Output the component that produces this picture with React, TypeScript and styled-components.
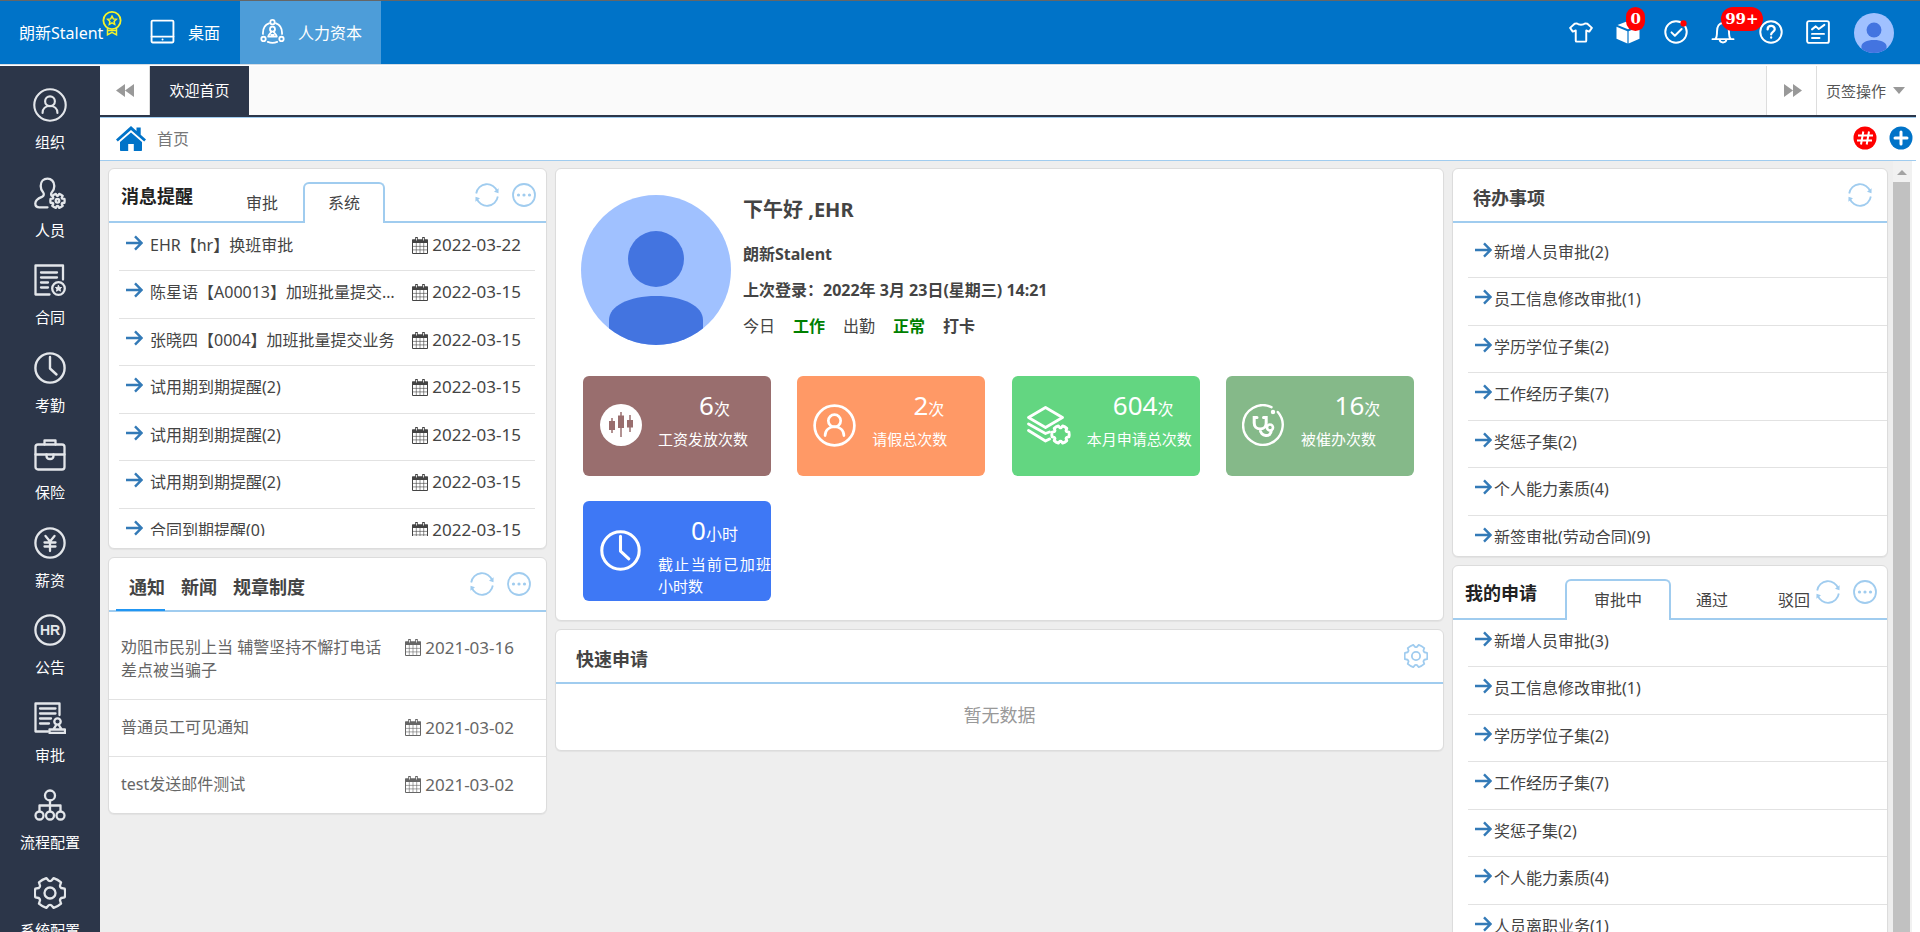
import React from "react";
import styled, { createGlobalStyle, css } from "styled-components";

const BLUE = "#0073c8";
const NAVY = "#2c3649";
const SKY = "#a0ccef";

const GlobalStyle = createGlobalStyle`
  * { box-sizing: border-box; }
  body {
    margin: 0;
    color: #444;
    background: #fff;
    font: 16px/24px "Noto Sans", "Noto Sans CJK SC", sans-serif;
  }
  button {
    margin: 0;
    padding: 0;
    border: 0;
    background: none;
    color: inherit;
    font: inherit;
    cursor: pointer;
  }
  a { color: inherit; text-decoration: none; }
  ul { list-style: none; margin: 0; padding: 0; }
  h1, h2, h3, p { margin: 0; }
  svg { display: block; flex: none; }
`;

/* ---------- icons ---------- */

type IconProps = { size?: number; w?: number; children?: React.ReactNode };

const Line = ({ size = 32, w = 2.3, children }: IconProps) => (
  <svg width={size} height={size} viewBox="0 0 32 32" fill="none" stroke="currentColor" strokeWidth={w} strokeLinecap="round" strokeLinejoin="round" aria-hidden="true">
    {children}
  </svg>
);

function gear(cx: number, cy: number, outer: number, inner: number, teeth: number) {
  const step = 360 / teeth;
  const at = (deg: number, r: number) => {
    const a = (deg * Math.PI) / 180;
    return `${(cx + r * Math.cos(a)).toFixed(2)} ${(cy + r * Math.sin(a)).toFixed(2)}`;
  };
  let d = `M${at(-step * 0.27, outer)}`;
  for (let k = 0; k < teeth; k++) {
    const c = k * step;
    d += `Q${at(c, outer * 1.02)} ${at(c + step * 0.27, outer)}`;
    d += `L${at(c + step * 0.4, inner)}Q${at(c + step * 0.5, inner * 0.95)} ${at(c + step * 0.6, inner)}`;
    d += `L${at(c + step * 0.73, outer)}`;
  }
  return d + "Z";
}

const OrgIcon = ({ size = 34, w = 2 }: IconProps) => (
  <Line size={size} w={w}>
    <circle cx="16" cy="16" r="14.8" />
    <circle cx="16" cy="12.5" r="4.6" />
    <path d="M9 23.5c0-4 3-6.6 7-6.6s7 2.6 7 6.6" />
  </Line>
);
const StaffIcon = () => (
  <Line>
    <path d="M17.5 18.5c-1-1.500-.2-2.600.6-3.600 1.300-1.600 2.200-3.300 2.200-6 0-4.400-3-7.200-6.800-7.200S6.700 4.500 6.700 8.900c0 2.700.9 4.400 2.200 6 1.500 2 1.200 4-1 5C4.500 21.300 1.300 23.500 1.300 26.500c0 2.500 1.700 3.800 4.200 3.800h8" />
    <path d={gear(23.5, 23.8, 7.2, 5.2, 6)} />
    <circle cx="23.5" cy="23.8" r="1.8" />
  </Line>
);
const ContractIcon = () => (
  <Line>
    <path d="M15.500 30.500H1.500v-29h27.500v14M7 8.500h16M7 13.500h16M7 18.500h7M7 23.500h7" />
    <circle cx="24.500" cy="24.500" r="6.300" />
    <path d="m24.500 21.500 1 2h2.100l-1.600 1.500.5 2.200-2-1.100-2 1.100.5-2.200-1.600-1.500h2.100Z" fill="currentColor" strokeWidth="1" />
  </Line>
);
const ClockIcon = ({ size = 32 }: IconProps) => (
  <Line size={size} w={2.400}>
    <circle cx="16" cy="16" r="14.600" />
    <path d="M16 5v11.500l6.500 6" />
  </Line>
);
const CaseIcon = () => (
  <Line>
    <rect x="1.500" y="5.500" width="29" height="25" rx="2.500" />
    <path d="M10.500 5.500v-4h11v4M1.500 15.500h11M19.500 15.500h11" />
    <path d="M12.500 15.500h7v1.500c0 4-7 4-7 0Z" />
  </Line>
);
const YuanIcon = () => (
  <Line>
    <circle cx="16" cy="16" r="14.600" />
    <path d="m11.500 9 4.500 5.500L20.500 9M16 14.500V24M10.500 15.500h11M10.500 19.500h11" />
  </Line>
);
const HrIcon = () => (
  <Line>
    <circle cx="16" cy="16" r="14.600" />
    <text x="16" y="20.800" textAnchor="middle" fontFamily="Liberation Sans, sans-serif" fontWeight="700" fontSize="14" fill="currentColor" stroke="none">HR</text>
  </Line>
);
const ApproveIcon = () => (
  <Line>
    <path d="M14 29.500H1.500v-28h24V13M6 6.500h15.500M6 11.500h15.500M6 16.500h11M6 21.500h9" />
    <circle cx="23.500" cy="19.500" r="3.200" />
    <path d="M22 22.800c0 2-2.500 3.200-2.500 4.700h8c0-1.500-2.500-2.700-2.500-4.700M15.500 27.500h15.500v3.500H15.500Z" />
  </Line>
);
const FlowIcon = () => (
  <Line>
    <circle cx="16" cy="6.500" r="5" />
    <path d="M16 11.500v10.500M5.500 22v-5.500h21V22" />
    <circle cx="5.500" cy="26.500" r="4" />
    <circle cx="16" cy="26.500" r="4" />
    <circle cx="26.500" cy="26.500" r="4" />
  </Line>
);
const GearIcon = ({ size = 32, w = 2.300 }: IconProps) => (
  <Line size={size} w={w}>
    <path d={gear(16, 16, 15.300, 12.300, 6)} />
    <circle cx="16" cy="16" r="5.500" />
  </Line>
);

const MedalIcon = () => (
  <svg width="20" height="25" viewBox="0 0 20 25" fill="none" stroke="#f3f32b" strokeWidth="1.800" aria-hidden="true">
    <circle cx="10" cy="9.500" r="8.600" />
    <path d="m10 5.200 1.300 2.700 3 .4-2.200 2.100.6 3-2.700-1.500-2.700 1.500.6-3-2.200-2.100 3-.4Z" strokeWidth="1.500" />
    <path d="M5.500 17v6.800l4.500-2.500 4.500 2.500V17M5.500 19.500h9" strokeWidth="1.500" />
  </svg>
);
const TabletIcon = () => (
  <Line size={25} w={2.400}>
    <rect x="2" y="2" width="28" height="28" rx="1.500" />
    <path d="M2 22.500h28M16 26.300h.1" />
  </Line>
);
const CapitalIcon = () => (
  <Line size={25} w={2.300}>
    <circle cx="16" cy="4" r="2.800" />
    <circle cx="4.500" cy="25.500" r="2.800" />
    <circle cx="27.500" cy="25.500" r="2.800" />
    <path d="M11.500 5.500C6 7.500 3.500 12 3.800 19M20.500 5.500c5.500 2 8 6.500 7.700 13.500M10 29.300c4 1.600 8 1.600 12 0" />
    <circle cx="16" cy="13" r="3.200" />
    <path d="M14.500 16c0 2-3.500 3-4 6.500h11c-.5-3.500-4-4.500-4-6.500M14.500 20.500h3" />
  </Line>
);
const ShirtIcon = () => (
  <Line size={24} w={2.600}>
    <path d="M10.500 4.500c2.500 2.500 8.500 2.500 11 0l3 .5 6 5.500-3.500 5-4-1.500V27.500c0 .8-.5 1.300-1.300 1.300H10.300c-.8 0-1.300-.5-1.300-1.300V14l-4 1.500-3.500-5 6-5.500Z" />
  </Line>
);
const BoxIcon = () => (
  <svg width="24" height="24" viewBox="0 0 24 24" fill="currentColor" aria-hidden="true">
    <path d="M12 1 22.500 5 12 9.300 1.500 5ZM.5 6.800l10.900 4.400v12.300L.5 18.800ZM23.500 6.800l-10.900 4.400v12.300l10.900-4.700Z" />
  </svg>
);
const CheckIcon = () => (
  <Line size={24} w={2.600}>
    <circle cx="16" cy="16" r="14.300" />
    <path d="m10 16.500 4.500 4.500 9-9" />
    <circle cx="26" cy="4.500" r="4.200" fill="#f00" stroke="none" />
  </Line>
);
const BellIcon = () => (
  <Line size={24} w={2.600}>
    <path d="M2 25.500h28M6 25c1.800-2 2-4 2-9.500 0-7 3-11.500 8-11.500s8 4.500 8 11.500c0 5.500.2 7.500 2 9.500M11.500 26.500c1 4.500 8 4.500 9 0" />
  </Line>
);
const HelpIcon = () => (
  <Line size={24} w={2.600}>
    <circle cx="16" cy="16" r="14.300" />
    <path d="M11.500 12.500c0-6 9.500-6 9.500-.3 0 3.500-4.800 3.600-4.800 7M16.200 23.300v.2" strokeWidth="3" />
  </Line>
);
const ReportIcon = () => (
  <Line size={24} w={2.600}>
    <rect x="1.500" y="1.500" width="29" height="29" rx="2.500" />
    <path d="m8 12.500 5-4 4 3.500 7.500-5.500M8 18.500h16M8 24h10" />
  </Line>
);
const RefreshIcon = () => (
  <svg width="24" height="24" viewBox="0 0 24 24" fill="none" stroke="currentColor" strokeWidth="1.800" aria-hidden="true">
    <path d="M1.200 10.500A10.900 10.900 0 0 1 22.300 8.600M22.800 13.500A10.900 10.900 0 0 1 1.700 15.400" />
    <path d="M19 8.700 23.600 5.300l-.1 5ZM5 15.300.4 18.700l.1-5Z" fill="currentColor" stroke="none" />
  </svg>
);
const MoreIcon = () => (
  <svg width="24" height="24" viewBox="0 0 24 24" fill="currentColor" aria-hidden="true">
    <circle cx="12" cy="12" r="11" fill="none" stroke="currentColor" strokeWidth="1.800" />
    <circle cx="6.500" cy="12" r="1.600" />
    <circle cx="12" cy="12" r="1.600" />
    <circle cx="17.500" cy="12" r="1.600" />
  </svg>
);
const ArrowIcon = () => (
  <svg width="17" height="20" viewBox="0 0 17 20" fill="none" stroke="#337ab7" strokeWidth="2.400" aria-hidden="true">
    <path d="M0 10h15.500M9 3.300 15.500 10 9 16.700" />
  </svg>
);
const CalendarIcon = () => (
  <svg width="16" height="17" viewBox="0 0 16 17" fill="none" stroke="currentColor" aria-hidden="true">
    <path d="M.5 3h15v13.500H.5Z" />
    <path d="M0 2.500h16v3.500H0Z" fill="currentColor" stroke="none" />
    <path d="M4.500.5v3.500M11.500.5v3.500" strokeWidth="2.600" strokeLinecap="round" />
    <path d="M4.500 1v2.500M11.500 1v2.500" stroke="#fff" strokeWidth=".8" />
    <path d="M4.300 6v10M8 6v10M11.700 6v10M1 9.400h14M1 12.900h14" strokeWidth=".6" />
  </svg>
);
const HomeIcon = () => (
  <svg width="30" height="26" viewBox="0 0 30 26" fill={BLUE} aria-hidden="true">
    <path d="M15 6.500 26 16v8.200c0 .5-.3.800-.8.800h-7.400v-7h-5.600v7H4.800c-.5 0-.8-.3-.8-.8V16Z" />
    <path d="M15 0 20.500 5V1.500h4.200v7.200L30 13.500l-1.800 2L15 4 1.800 15.500l-1.800-2Z" />
  </svg>
);
const Rewind = ({ flip }: { flip?: boolean }) => (
  <svg width="18" height="13" viewBox="0 0 18 13" fill="#999" aria-hidden="true">
    <path d={flip ? "M9 0v13L18 6.500ZM0 0v13L9 6.500Z" : "M9 0v13L0 6.500ZM18 0v13L9 6.500Z"} />
  </svg>
);
const HashIcon = () => (
  <svg width="24" height="24" viewBox="0 0 24 24" aria-hidden="true">
    <circle cx="12" cy="12" r="11.500" fill="#f00" />
    <path d="M10.300 5.500 8 18.500M16 5.500l-2.300 13M5 9.500h15M4 14.500h15" stroke="#fff" strokeWidth="2" />
  </svg>
);
const PlusIcon = () => (
  <svg width="24" height="24" viewBox="0 0 24 24" aria-hidden="true">
    <circle cx="12" cy="12" r="11.500" fill={BLUE} />
    <path d="M12 6v12M6 12h12" stroke="#fff" strokeWidth="3" strokeLinecap="round" />
  </svg>
);
const Avatar = ({ size, id }: { size: number; id: string }) => (
  <svg width={size} height={size} viewBox="0 0 150 150" role="img" aria-label="头像">
    <clipPath id={id}><circle cx="75" cy="75" r="75" /></clipPath>
    <g clipPath={`url(#${id})`}>
      <rect width="150" height="150" fill="#a0c1ff" />
      <circle cx="75" cy="64" r="28" fill="#4374e0" />
      <path d="M28 160v-35c0-14 20-24 47-24s47 10 47 24v35Z" fill="#4374e0" />
    </g>
  </svg>
);
const CandleIcon = () => (
  <svg width="42" height="42" viewBox="0 0 42 42" aria-hidden="true">
    <circle cx="21" cy="21" r="21" fill="#fff" />
    <path d="M12 14v15M21 8v25M30 11v17" stroke="#996e6e" strokeWidth="1.500" />
    <path d="M9 17h6v9H9ZM18 11.500h6v12.500h-6ZM27 16h6v7.500h-6Z" fill="#996e6e" />
  </svg>
);
const LayersIcon = () => (
  <svg width="44" height="42" viewBox="0 0 44 42" fill="none" stroke="currentColor" strokeWidth="2.800" strokeLinejoin="round" strokeLinecap="round" aria-hidden="true">
    <path d="M18.500 3.500 35.500 13.500 18.500 23.500 1.500 13.500Z" />
    <path d="m1.500 20 17 9.500 4-1.500M1.500 26.500l17 10.500 4-2" />
    <path d={gear(33.5, 30.5, 8.8, 6.800, 6)} />
  </svg>
);
const StethoscopeIcon = () => (
  <svg width="42" height="42" viewBox="0 0 42 42" fill="none" stroke="currentColor" strokeWidth="2.400" strokeLinecap="round" aria-hidden="true">
    <path d="M29.500 3.200A19.800 19.800 0 1 0 35.800 8" />
    <circle cx="31" cy="8" r="1" fill="currentColor" />
    <path d="M15 13.500h-2.800v5.500c0 3.500 2.200 6 6 6s6-2.500 6-6v-5.500h-2.700M18.200 25c0 8 11 9 11 1.500" strokeWidth="3" />
    <circle cx="28" cy="23.500" r="3" strokeWidth="2.600" />
  </svg>
);

/* ---------- header ---------- */

const Shell = styled.div`
  display: flex;
  flex-direction: column;
  height: 100vh;
  overflow: hidden;
`;
const TopBar = styled.header`
  flex: none;
  display: flex;
  align-items: stretch;
  height: 65px;
  margin-bottom: 1px;
  padding-right: 26px;
  color: #fff;
  background: ${BLUE};
  border-top: 1px solid #666;
  border-bottom: 1px solid #d5dde5;
`;
const Brand = styled.h1`
  display: flex;
  align-items: center;
  width: 132px;
  padding-left: 19px;
  font-size: 16px;
  font-weight: 400;
  svg { margin: 0 0 18px -1px; }
`;
const NavLink = styled.a<{ $active?: boolean }>`
  display: flex;
  align-items: center;
  gap: 13px;
  padding: 0 20px 0 18px;
  background: ${(p) => (p.$active ? "#4d9dd9" : "transparent")};
  svg { margin-bottom: 2px; }
  ${(p) => p.$active && css`padding: 0 19px 0 20px;`}
`;
const Tools = styled.div`
  display: flex;
  justify-content: space-between;
  align-items: center;
  width: 261px;
  margin: 0 24px 0 auto;
  padding-bottom: 1px;
`;
const ToolButton = styled.button`
  position: relative;
  width: 24px;
  height: 24px;
`;
const Badge = styled.span`
  position: absolute;
  left: 10px;
  top: -13px;
  z-index: 1;
  padding: 0 4px;
  border-radius: 12px;
  background: #f00;
  font: bold 15px/24px "DejaVu Serif", serif;
`;
const Profile = styled.button`
  align-self: center;
`;

/* ---------- side bar ---------- */

const Body = styled.div`
  flex: 1;
  display: flex;
  min-height: 0;
`;
const SideBar = styled.nav`
  flex: none;
  width: 100px;
  overflow: hidden;
  padding-top: 22px;
  color: #fff;
  background: ${NAVY};
`;
const SideItem = styled.li`
  height: 88px;
  &:nth-child(even) { height: 87px; }
  a {
    display: flex;
    flex-direction: column;
    align-items: center;
    gap: 9px;
    font-size: 15px;
    line-height: 22px;
  }
  svg { color: #e3e6ea; }
`;
const IconSlot = styled.span`
  display: grid;
  place-items: center;
  height: 34px;
`;

/* ---------- main area ---------- */

const Main = styled.main`
  flex: 1;
  display: flex;
  flex-direction: column;
  min-width: 0;
  padding-right: 4px;
`;
const TabStrip = styled.div`
  flex: none;
  display: flex;
  height: 52px;
  padding-bottom: 2px;
  background: #fafafa;
  border-bottom: 1px solid ${SKY};
  box-shadow: inset 0 -2px 0 ${NAVY};
`;
const StripButton = styled.button<{ $right?: boolean }>`
  display: grid;
  place-items: center;
  width: 50px;
  background: #fff;
  border-right: 1px solid #ddd;
  ${(p) => p.$right && css`margin-left: auto; width: 51px; padding-left: 2px; border-left: 1px solid #ddd;`}
`;
const PageTab = styled.button`
  width: 99px;
  padding-bottom: 2px;
  color: #fff;
  background: ${NAVY};
  font-size: 15px;
`;
const TabMenu = styled.button`
  display: flex;
  align-items: center;
  gap: 7px;
  width: 99px;
  padding-left: 9px;
  background: #fff;
  color: #555;
  font-size: 15px;
  &::after {
    content: "";
    border: 6px solid transparent;
    border-top: 7px solid #999;
    border-bottom: 0;
  }
`;
const Crumbs = styled.div`
  flex: none;
  display: flex;
  align-items: center;
  height: 43px;
  padding: 0 3px 0 16px;
  color: #777;
  border-bottom: 1px solid ${SKY};
  a { display: flex; align-items: center; gap: 11px; }
`;
const CrumbActions = styled.div`
  display: flex;
  gap: 12px;
  margin-left: auto;
  padding-bottom: 3px;
`;
const Viewport = styled.div`
  flex: 1;
  display: flex;
  min-height: 0;
`;
const Board = styled.div`
  flex: 1;
  display: grid;
  grid-template-columns: minmax(0, 439fr) minmax(0, 889fr) minmax(0, 436fr);
  gap: 8px;
  padding: 7px 5px 0 8px;
  overflow: hidden;
  background: #eee;
`;
const Column = styled.div`
  display: flex;
  flex-direction: column;
  gap: 8px;
  min-width: 0;
`;
const ScrollTrack = styled.div`
  display: flex;
  flex-direction: column;
  align-items: center;
  width: 19px;
  margin-right: 4px;
  padding: 9px 2px 0 0;
  background: #f1f1f1;
  &::before {
    content: "";
    margin-bottom: 7px;
    border: 5px solid transparent;
    border-bottom-color: #a3a3a3;
    border-top: 0;
  }
`;
const ScrollThumb = styled.div`
  flex: 1;
  width: 100%;
  background: #c1c1c1;
`;

/* ---------- panels ---------- */

const Panel = styled.section`
  flex: none;
  background: #fff;
  border: 1px solid #dcdcdc;
  border-radius: 6px;
  box-shadow: 0 1px 1px rgba(0, 0, 0, 0.05);
`;
const PanelHead = styled.div<{ $tabbed?: boolean }>`
  display: flex;
  align-items: center;
  height: 54px;
  padding: 0 ${(p) => (p.$tabbed ? 10 : 15)}px 0 ${(p) => (p.$tabbed ? 12 : 20)}px;
  border-bottom: 2px solid ${SKY};
`;
const PanelTitle = styled.h2<{ $strong?: boolean }>`
  flex: none;
  padding-top: ${(p) => (p.$strong ? 2 : 6)}px;
  font-size: 18px;
  line-height: 24px;
  color: ${(p) => (p.$strong ? "#222" : "#444")};
`;
const PanelActions = styled.div`
  display: flex;
  gap: 13px;
  margin-left: auto;
  color: ${SKY};
`;
const Tabs = styled.div`
  flex: 1;
  display: flex;
  align-self: flex-end;
  min-width: 0;
  margin: 0 0 -2px 28px;
`;
const Tab = styled.button<{ $active?: boolean; $wide?: boolean }>`
  flex: none;
  height: 41px;
  padding: 0 ${(p) => (p.$wide ? 27 : 23)}px 2px;
  border: 2px solid transparent;
  border-bottom: 0;
  border-radius: 6px 6px 0 0;
  ${(p) => p.$active && css`border-color: ${SKY}; background: #fff;`}
`;
const NewsTabs = styled.div`
  display: flex;
  gap: 3px;
  align-self: stretch;
  margin: 0 0 -1px -13px;
`;
const NewsTab = styled.button<{ $active?: boolean }>`
  padding: 6px 0 0 13px;
  font-size: 18px;
  font-weight: 700;
  border-bottom: 2px solid ${(p) => (p.$active ? "#2196f3" : "transparent")};
`;

const ItemList = styled.ul<{ $inset?: boolean; $height?: number; $top?: number }>`
  margin: 0 ${(p) => (p.$inset ? 11 : 0)}px 12px ${(p) => (p.$inset ? 10 : 15)}px;
  padding-top: ${(p) => p.$top ?? 0}px;
  height: ${(p) => (p.$height ? p.$height + "px" : "auto")};
  overflow: hidden;
`;
const Item = styled.li<{ $gap: number }>`
  display: flex;
  align-items: flex-start;
  gap: ${(p) => p.$gap}px;
  height: 47px;
  padding: 9px 14px 0 7px;
  border-bottom: 1px solid #e2e2e2;
  &:nth-child(even) { height: 48px; }
`;
const ItemText = styled.a`
  flex: 1;
  min-width: 0;
  overflow: hidden;
  white-space: nowrap;
  text-overflow: ellipsis;
`;
const DateTag = styled.time`
  flex: none;
  display: flex;
  align-items: center;
  gap: 4px;
  font-size: 17px;
`;
const NewsList = styled.ul`
  padding-top: 8px;
  color: #666;
`;
const NewsItem = styled.li`
  display: flex;
  align-items: flex-start;
  gap: 18px;
  padding: 16px 32px 17px 12px;
  line-height: 23px;
  & + & { border-top: 1px solid #e2e2e2; }
  a { flex: 1; }
`;

/* ---------- welcome ---------- */

const Welcome = styled.div`
  display: flex;
  gap: 12px;
  padding: 26px 25px 0;
`;
const Greeting = styled.div`
  h2 { font-size: 20px; line-height: 30px; margin-bottom: 17px; }
  p { line-height: 24px; margin-bottom: 12px; font-weight: 700; }
`;
const Status = styled.div`
  display: flex;
  gap: 18px;
`;
const Mark = styled.strong<{ $ok?: boolean }>`
  color: ${(p) => (p.$ok ? "#008000" : "#444")};
`;
const Cards = styled.div`
  display: grid;
  grid-template-columns: repeat(4, 188px);
  justify-content: space-between;
  row-gap: 25px;
  padding: 31px 29px 19px 27px;
`;
const Card = styled.a<{ $color: string }>`
  display: grid;
  grid-template-columns: 75px 113px;
  height: 100px;
  overflow: hidden;
  border-radius: 6px;
  color: #fff;
  background: ${(p) => p.$color};
`;
const CardIcon = styled.span`
  display: grid;
  place-items: center;
  height: 98px;
`;
const CardText = styled.span`
  display: block;
  padding-top: 13px;
`;
const Amount = styled.span`
  display: block;
  height: 39px;
  line-height: 32px;
  text-align: center;
  b { font-size: 26px; font-weight: 400; }
`;
const CardLabel = styled.span`
  display: block;
  font-size: 15px;
  line-height: 22px;
  text-align: justify;
`;
const Empty = styled.p`
  padding: 19px 0 23px;
  font-size: 18px;
  text-align: center;
  color: #999;
`;

/* ---------- data ---------- */

const side: [string, React.ReactNode][] = [
  ["组织", <OrgIcon />],
  ["人员", <StaffIcon />],
  ["合同", <ContractIcon />],
  ["考勤", <ClockIcon />],
  ["保险", <CaseIcon />],
  ["薪资", <YuanIcon />],
  ["公告", <HrIcon />],
  ["审批", <ApproveIcon />],
  ["流程配置", <FlowIcon />],
  ["系统配置", <GearIcon />],
];
const messages: [string, string][] = [
  ["EHR【hr】换班审批", "2022-03-22"],
  ["陈星语【A00013】加班批量提交业务", "2022-03-15"],
  ["张晓四【0004】加班批量提交业务", "2022-03-15"],
  ["试用期到期提醒(2)", "2022-03-15"],
  ["试用期到期提醒(2)", "2022-03-15"],
  ["试用期到期提醒(2)", "2022-03-15"],
  ["合同到期提醒(0)", "2022-03-15"],
];
const news: [string, string][] = [
  ["劝阻市民别上当 辅警坚持不懈打电话差点被当骗子", "2021-03-16"],
  ["普通员工可见通知", "2021-03-02"],
  ["test发送邮件测试", "2021-03-02"],
];
const todos = ["新增人员审批(2)", "员工信息修改审批(1)", "学历学位子集(2)", "工作经历子集(7)", "奖惩子集(2)", "个人能力素质(4)", "新签审批(劳动合同)(9)"];
const requests = ["新增人员审批(3)", "员工信息修改审批(1)", "学历学位子集(2)", "工作经历子集(7)", "奖惩子集(2)", "个人能力素质(4)", "人员离职业务(1)"];
const cards: [string, string, string, string, React.ReactNode][] = [
  ["6", "次", "工资发放次数", "#996e6e", <CandleIcon />],
  ["2", "次", "请假总次数", "#ff9966", <OrgIcon size={43} />],
  ["604", "次", "本月申请总次数", "#63d681", <LayersIcon />],
  ["16", "次", "被催办次数", "#85b989", <StethoscopeIcon />],
  ["0", "小时", "截止当前已加班小时数", "#3e78f5", <ClockIcon size={41} />],
];

const Refresh = () => <button aria-label="刷新"><RefreshIcon /></button>;
const More = () => <button aria-label="更多"><MoreIcon /></button>;

const Stamp = ({ date }: { date: string }) => (
  <DateTag dateTime={date}><CalendarIcon />{date}</DateTag>
);

export default function App() {
  return (
    <Shell>
      <GlobalStyle />
      <TopBar>
        <Brand>朗新Stalent<MedalIcon /></Brand>
        <NavLink href="#desktop"><TabletIcon /><span>桌面</span></NavLink>
        <NavLink href="#capital" $active><CapitalIcon /><span>人力资本</span></NavLink>
        <Tools>
          <ToolButton aria-label="主题"><ShirtIcon /></ToolButton>
          <ToolButton aria-label="应用"><BoxIcon /><Badge>0</Badge></ToolButton>
          <ToolButton aria-label="待办"><CheckIcon /></ToolButton>
          <ToolButton aria-label="消息"><BellIcon /><Badge>99+</Badge></ToolButton>
          <ToolButton aria-label="帮助"><HelpIcon /></ToolButton>
          <ToolButton aria-label="报表"><ReportIcon /></ToolButton>
        </Tools>
        <Profile aria-label="个人中心"><Avatar size={40} id="avatar-small" /></Profile>
      </TopBar>
      <Body>
        <SideBar>
          <ul>
            {side.map(([label, icon]) => (
              <SideItem key={label}>
                <a href={"#" + label}><IconSlot>{icon}</IconSlot>{label}</a>
              </SideItem>
            ))}
          </ul>
        </SideBar>
        <Main>
          <TabStrip>
            <StripButton aria-label="向左"><Rewind /></StripButton>
            <PageTab>欢迎首页</PageTab>
            <StripButton aria-label="向右" $right><Rewind flip /></StripButton>
            <TabMenu>页签操作</TabMenu>
          </TabStrip>
          <Crumbs>
            <a href="#home"><HomeIcon /><span>首页</span></a>
            <CrumbActions>
              <button aria-label="标签"><HashIcon /></button>
              <button aria-label="添加"><PlusIcon /></button>
            </CrumbActions>
          </Crumbs>
          <Viewport>
            <Board>
              <Column>
                <Panel>
                  <PanelHead $tabbed>
                    <PanelTitle $strong>消息提醒</PanelTitle>
                    <Tabs>
                      <Tab>审批</Tab>
                      <Tab $active>系统</Tab>
                    </Tabs>
                    <PanelActions><Refresh /><More /></PanelActions>
                  </PanelHead>
                  <ItemList $inset $height={313} $top={1}>
                    {messages.map(([text, date], i) => (
                      <Item key={i} $gap={7}>
                        <ArrowIcon />
                        <ItemText href="#message">{text}</ItemText>
                        <Stamp date={date} />
                      </Item>
                    ))}
                  </ItemList>
                </Panel>
                <Panel>
                  <PanelHead>
                    <NewsTabs>
                      <NewsTab $active>通知</NewsTab>
                      <NewsTab>新闻</NewsTab>
                      <NewsTab>规章制度</NewsTab>
                    </NewsTabs>
                    <PanelActions><Refresh /><More /></PanelActions>
                  </PanelHead>
                  <NewsList>
                    {news.map(([text, date]) => (
                      <NewsItem key={text}>
                        <a href="#news">{text}</a>
                        <Stamp date={date} />
                      </NewsItem>
                    ))}
                  </NewsList>
                </Panel>
              </Column>
              <Column>
                <Panel>
                  <Welcome>
                    <Avatar size={150} id="avatar-large" />
                    <Greeting>
                      <h2>下午好 ,EHR</h2>
                      <p>朗新Stalent</p>
                      <p>上次登录：2022年 3月 23日(星期三) 14:21</p>
                      <Status>
                        <span>今日</span>
                        <Mark $ok>工作</Mark>
                        <span>出勤</span>
                        <Mark $ok>正常</Mark>
                        <Mark>打卡</Mark>
                      </Status>
                    </Greeting>
                  </Welcome>
                  <Cards>
                    {cards.map(([value, unit, label, color, icon]) => (
                      <Card key={label} href="#card" $color={color}>
                        <CardIcon>{icon}</CardIcon>
                        <CardText>
                          <Amount><b>{value}</b>{unit}</Amount>
                          <CardLabel>{label}</CardLabel>
                        </CardText>
                      </Card>
                    ))}
                  </Cards>
                </Panel>
                <Panel>
                  <PanelHead>
                    <PanelTitle>快速申请</PanelTitle>
                    <PanelActions>
                      <button aria-label="设置"><GearIcon size={24} w={2.400} /></button>
                    </PanelActions>
                  </PanelHead>
                  <Empty>暂无数据</Empty>
                </Panel>
              </Column>
              <Column>
                <Panel>
                  <PanelHead>
                    <PanelTitle>待办事项</PanelTitle>
                    <PanelActions><Refresh /></PanelActions>
                  </PanelHead>
                  <ItemList $height={321} $top={8}>
                    {todos.map((text) => (
                      <Item key={text} $gap={2}>
                        <ArrowIcon />
                        <ItemText href="#todo">{text}</ItemText>
                      </Item>
                    ))}
                  </ItemList>
                </Panel>
                <Panel>
                  <PanelHead $tabbed>
                    <PanelTitle $strong>我的申请</PanelTitle>
                    <Tabs>
                      <Tab $active $wide>审批中</Tab>
                      <Tab>通过</Tab>
                      <Tab>驳回</Tab>
                    </Tabs>
                    <PanelActions><Refresh /><More /></PanelActions>
                  </PanelHead>
                  <ItemList>
                    {requests.map((text) => (
                      <Item key={text} $gap={2}>
                        <ArrowIcon />
                        <ItemText href="#request">{text}</ItemText>
                      </Item>
                    ))}
                  </ItemList>
                </Panel>
              </Column>
            </Board>
            <ScrollTrack><ScrollThumb /></ScrollTrack>
          </Viewport>
        </Main>
      </Body>
    </Shell>
  );
}
